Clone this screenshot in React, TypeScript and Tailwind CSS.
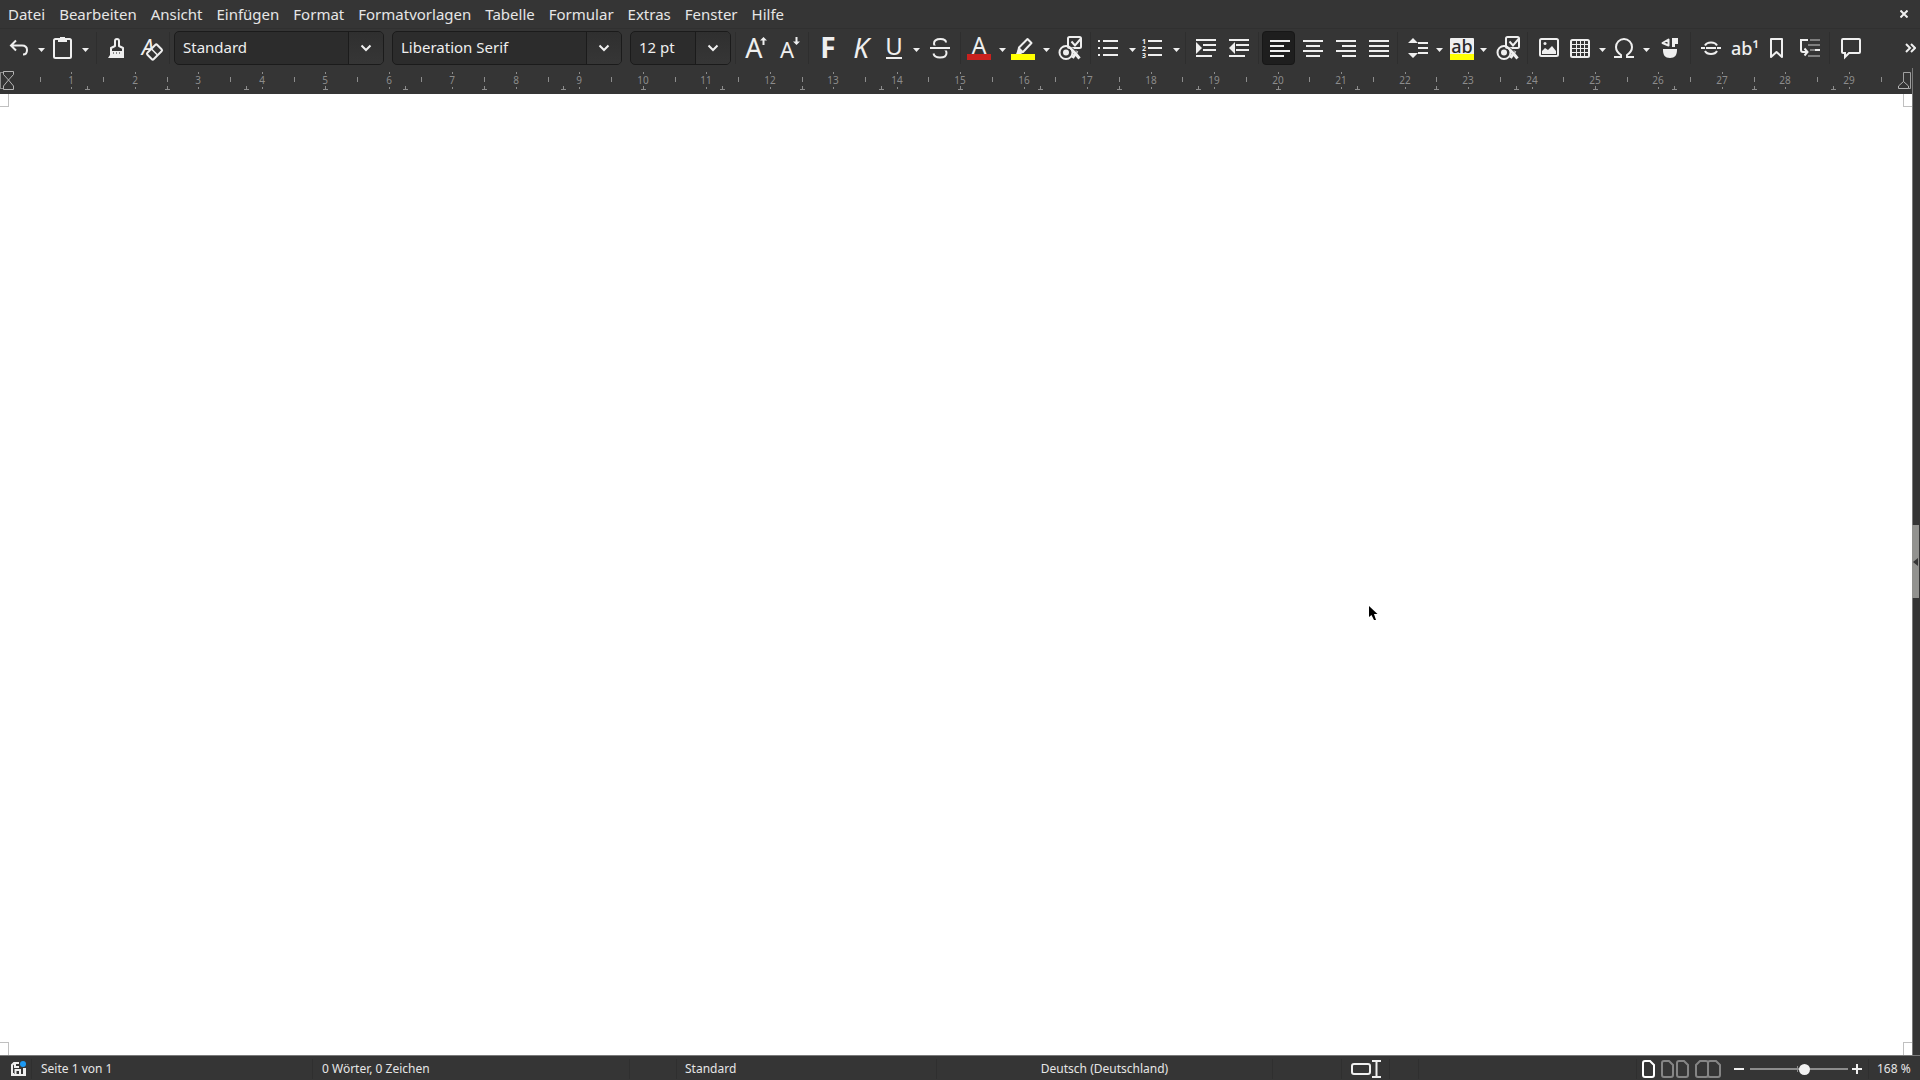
import { ReactNode } from 'react';

const menus = ['Datei', 'Bearbeiten', 'Ansicht', 'Einfügen', 'Format', 'Formatvorlagen', 'Tabelle', 'Formular', 'Extras', 'Fenster', 'Hilfe'];

const CM = 63.48;
const RULER_START = 8;

function Icon({ children }: { children: ReactNode }) {
  return (
    <svg width="24" height="24" viewBox="0 0 24 24" fill="none" stroke="#efefef" strokeWidth="2" className="shrink-0 overflow-visible">
      {children}
    </svg>
  );
}

function Glyph({ x, y, size, weight = 400, italic = false, color = '#efefef', children }: { x: number, y: number, size: number, weight?: number, italic?: boolean, color?: string, children: ReactNode }) {
  return (
    <text x={x} y={y} fontSize={size} fontWeight={weight} fontStyle={italic ? 'italic' : 'normal'} textAnchor="middle" fill={color} stroke="none" className="font-['Noto_Sans',sans-serif]">
      {children}
    </text>
  );
}

function Tool({ label, active, children }: { label: string, active?: boolean, children: ReactNode }) {
  return (
    <button aria-label={label} className={active ? "flex h-[34px] w-[33px] shrink-0 items-center rounded-[4px] border border-[#171717] bg-[#1e1e1e] pl-1" : "flex h-[34px] w-[33px] shrink-0 items-center pl-1"}>
      <Icon>{children}</Icon>
    </button>
  );
}

function SplitTool({ label, children }: { label: string, children: ReactNode }) {
  return (
    <button aria-label={label} aria-haspopup="menu" className="flex h-[34px] w-11 shrink-0 items-center gap-[7px] pl-1">
      <Icon>{children}</Icon>
      <svg width="7" height="4" viewBox="0 0 7 4" fill="#efefef" className="mt-1 shrink-0"><path d="M0 0h7L3.5 4z" /></svg>
    </button>
  );
}

function Separator() {
  return <div className="mx-[3px] h-8 w-px shrink-0 bg-[#2e2e2e]" />;
}

function Combo({ label, value, className, arrow }: { label: string, value: string, className: string, arrow: string }) {
  return (
    <div className={`relative h-[34px] shrink-0 overflow-hidden rounded-[5px] border border-[#1b1b1b] bg-[#2c2c2c] ${className}`}>
      <select aria-label={label} className="h-full w-full appearance-none bg-transparent pl-2 pb-px text-[15px] text-[#efefef] outline-none">
        <option>{value}</option>
      </select>
      <div className={`pointer-events-none absolute inset-y-0 right-0 flex items-center justify-center border-l border-[#1b1b1b] bg-linear-to-b from-[#2f2f2f] to-[#363636] ${arrow}`}>
        <svg width="12" height="8" viewBox="0 0 12 8" fill="none" stroke="#efefef" strokeWidth="2"><path d="M1.500 1.500 6 6l4.500-4.500" /></svg>
      </div>
    </div>
  );
}

function CharStyleIcon() {
  return (
    <>
      <rect x="10" y="1" width="13" height="11" rx="1.500" />
      <path d="M13.500 5.500l3.500 4 6-7" />
      <circle cx="8" cy="16.500" r="6.500" />
      <circle cx="8" cy="16.500" r="3" fill="#efefef" stroke="none" />
      <path d="M13 12l8.500 10.500M19 15l-4.500 7" strokeWidth="3" />
      <path d="M14 11.500l5 5" stroke="#353535" strokeWidth="1" />
    </>
  );
}

function Toolbar() {
  return (
    <div className="flex h-10 shrink-0 items-center overflow-hidden border-t border-[#303030] pb-px pl-[3px] pr-1">
      <SplitTool label="Rückgängig"><path d="M9 4.500 4 9.500l5 5M4 9.500h11c3.500 0 5 1.800 5 4.500s-1.500 4.500-4 4.500" /></SplitTool>
      <SplitTool label="Einfügen">
        <rect x="3" y="3" width="17" height="19" rx="1.500" />
        <path d="M7 2h2V1h5v1h2v4H7z" fill="#efefef" stroke="none" />
      </SplitTool>
      <div className="w-0.5 shrink-0" />
      <Separator />
      <Tool label="Formatierung klonen">
        <path d="M11 10V5a2 2 0 0 1 4 0v5l4 2v4H7v-4z" strokeLinejoin="round" />
        <path d="M6 15h14v7H4l2-3z" fill="#efefef" stroke="none" />
        <path d="M9.500 16v2M12.500 16v2M15.500 16v2" stroke="#888" strokeWidth="1" />
      </Tool>
      <Tool label="Formatierung löschen">
        <Glyph x={11} y={19} size={22} italic>A</Glyph>
        <rect x="10.500" y="11.500" width="14" height="9" rx="1.500" transform="rotate(-45 17.500 16)" fill="#353535" />
        <path d="M14.500 13l6 6" strokeWidth="1.500" />
      </Tool>
      <Separator />
      <div className="mx-px flex shrink-0 gap-2">
        <Combo label="Absatzvorlage" value="Standard" className="w-[210px]" arrow="w-[35px]" />
        <Combo label="Schriftname" value="Liberation Serif" className="w-[230px]" arrow="w-[35px]" />
        <Combo label="Schriftgröße" value="12 pt" className="w-[101px]" arrow="w-[35px]" />
      </div>
      <Separator />
      <Tool label="Schrift vergrößern">
        <Glyph x={11} y={22} size={27}>A</Glyph>
        <path d="M20.500 9V4" /><path d="M17 4.500 20.500 1 24 4.500z" fill="#efefef" stroke="none" />
      </Tool>
      <Tool label="Schrift verkleinern">
        <Glyph x={11} y={22} size={22}>A</Glyph>
        <path d="M20.500 1v5" /><path d="M17 5.500 20.500 9 24 5.500z" fill="#efefef" stroke="none" />
      </Tool>
      <Separator />
      <Tool label="Fett"><Glyph x={12} y={22} size={28} weight={700}>F</Glyph></Tool>
      <Tool label="Kursiv"><Glyph x={12} y={22} size={28} weight={400} italic>K</Glyph></Tool>
      <SplitTool label="Unterstrichen"><Glyph x={12} y={19} size={24}>U</Glyph><path d="M4 22h16" /></SplitTool>
      <div className="w-0.5 shrink-0" />
      <Tool label="Durchgestrichen">
        <path d="M18 6.500C18 4 16 3 12.500 3S6 4.500 6 7.500 8 12 12 12s6.500 2 6.500 5-2.500 4.500-6.500 4.500S6 20 5.500 17.500" />
        <path d="M2 12h20" stroke="#353535" strokeWidth="5" />
        <path d="M2 12h20" />
      </Tool>
      <Separator />
      <SplitTool label="Schriftfarbe">
        <Glyph x={11} y={18} size={23}>A</Glyph>
        <path d="M-1 18h24v6H-1z" fill="#c9211e" stroke="none" />
      </SplitTool>
      <SplitTool label="Zeichenhervorhebungsfarbe">
        <path d="M7 11.500 15.500 3l4 4-8.500 9-5 1z" strokeLinejoin="round" />
        <path d="M7 11l4.500 4.500L9 18H4z" fill="#efefef" stroke="none" />
        <path d="M-1 18h24v6H-1z" fill="#ffff00" stroke="none" />
      </SplitTool>
      <div className="w-0.5 shrink-0" />
      <Tool label="Zeichenvorlage"><CharStyleIcon /></Tool>
      <Separator />
      <SplitTool label="Aufzählungsliste"><path d="M0 5h2M0 12h2M0 19h2M5 5h15M5 12h15M5 19h15" /></SplitTool>
      <SplitTool label="Nummerierte Liste">
        <Glyph x={2} y={8} size={7} weight={700}>
          <tspan x="2">1</tspan>
          <tspan x="2" dy="7">2</tspan>
          <tspan x="2" dy="7">3</tspan>
        </Glyph>
        <path d="M6 5h14M6 12h14M6 19h14" />
      </SplitTool>
      <Separator />
      <Tool label="Einzug erhöhen">
        <path d="M3 4h20M10 9h13M10 14h13M3 20h16" />
        <path d="M3 6l6 6-6 6z" fill="#efefef" stroke="none" />
      </Tool>
      <Tool label="Einzug verringern">
        <path d="M3 4h20M10 9h13M10 14h13M3 20h16" />
        <path d="M9 6l-6 6 6 6z" fill="#efefef" stroke="none" />
      </Tool>
      <Separator />
      <Tool label="Linksbündig" active><path d="M3 5h20M3 10h14M3 15h20M3 20h14" /></Tool>
      <Tool label="Zentriert"><path d="M4 5h20M7 10h14M4 15h20M7 20h14" /></Tool>
      <Tool label="Rechtsbündig"><path d="M4 5h20M10 10h14M4 15h20M10 20h14" /></Tool>
      <Tool label="Blocksatz"><path d="M4 5h20M4 10h20M4 15h20M4 20h20" /></Tool>
      <Separator />
      <SplitTool label="Zeilenabstand">
        <path d="M3 7l5-5 5 5zM3 17h10l-5 5z" fill="#efefef" stroke="none" />
        <path d="M13 7h10M13 12h10M13 17h10" />
      </SplitTool>
      <SplitTool label="Absatzhintergrund">
        <rect x="1" y="2" width="24" height="22" rx="1" fill="#efefef" stroke="none" />
        <Glyph x={13} y={17} size={18} weight={500} color="#2a2a2a">ab</Glyph>
        <path d="M1 18h24v6H1z" fill="#ffff00" stroke="none" />
      </SplitTool>
      <div className="w-0.5 shrink-0" />
      <Tool label="Absatzvorlage bearbeiten"><g transform="translate(1 0)"><CharStyleIcon /></g></Tool>
      <Separator />
      <Tool label="Bild einfügen">
        <rect x="5" y="3" width="18" height="17" rx="1.500" />
        <path d="M7 18v-3l3-3 3 2 4-4 4 5v3z" fill="#efefef" stroke="none" />
        <circle cx="10" cy="7.500" r="1.500" fill="#efefef" stroke="none" />
      </Tool>
      <SplitTool label="Tabelle einfügen">
        <rect x="3" y="4" width="18" height="17" rx="1.500" />
        <path d="M3 8.500h18M3 12.500h18M3 16.500h18M8.500 4v17M12.500 4v17M16.500 4v17" strokeWidth="1" />
      </SplitTool>
      <SplitTool label="Sonderzeichen">
        <path d="M2 21h7v-2c-3-2-5-4.500-5-8a8 8 0 0 1 16 0c0 3.500-2 6-5 8v2h7" />
      </SplitTool>
      <div className="w-0.5 shrink-0" />
      <Tool label="Formen">
        <path d="M10.500 3.500v6l-6-2.500z" strokeLinejoin="round" />
        <path d="M14 2h6v6h-3v3h-3zM5 13h14v1c0 5-2 8-7 8S5 19 5 14z" fill="#efefef" stroke="none" />
      </Tool>
      <Separator />
      <Tool label="Hyperlink">
        <path d="M3 12h4M19 12h4M8 12h10" />
        <path d="M7 9.500C8 7.500 10 6.500 13 6.500s5 1 6 3M7 15c1 2 3 3 6 3s5-1 6-3" />
      </Tool>
      <Tool label="Fußnote einfügen">
        <Glyph x={14} y={19} size={18} weight={500}>ab¹</Glyph>
      </Tool>
      <Tool label="Textmarke"><path d="M7 3h11v18l-5.500-5L7 21z" strokeLinejoin="round" /></Tool>
      <Tool label="Querverweis">
        <path d="M3 4h8M18 14h5M4 4v10q0 2 2 2h4M7.500 12.500l3 3.500-3 3.500" />
        <path d="M13 4h10M11 9h12M13 14h5M11 20h12" stroke="#7f7f7f" />
      </Tool>
      <Separator />
      <Tool label="Kommentar"><path d="M6 3h16q1 0 1 1v12q0 1-1 1H12l-4 4v-4H6q-1 0-1-1V4q0-1 1-1z" /></Tool>
      <button aria-label="Weitere Symbole" className="ml-auto shrink-0">
        <svg width="11" height="10" viewBox="0 0 11 10" fill="none" stroke="#efefef" strokeWidth="2"><path d="M1 1l4 4-4 4M6 1l4 4-4 4" /></svg>
      </button>
    </div>
  );
}

function Ruler() {
  const halves = Array.from({ length: 59 }, (_, i) => i + 1);
  const tabs = Array.from({ length: 23 }, (_, i) => i + 1);
  return (
    <svg width="100%" height="26" shapeRendering="crispEdges" stroke="#8c8c8c" fill="none" className="block">
      {halves.map((n) => {
        const x = Math.round(RULER_START + n * CM / 2) + 0.5;
        return n % 2 ? (
          <path key={n} d={`M${x} 9v5`} />
        ) : (
          <g key={n}>
            <path d={`M${x} 4v2M${x} 19v2`} />
            <text x={x - 0.5} y="16" fontSize="10" textAnchor="middle" fill="#8c8c8c" stroke="none">{n / 2}</text>
          </g>
        );
      })}
      {tabs.map((n) => {
        const x = Math.round(RULER_START + n * CM * 1.25) + 0.5;
        return <path key={n} d={`M${x} 18v4M${x - 2.5} 21.500h5`} />;
      })}
      <path d="M3 4.500H.5v16H3" />
      <g stroke="#b4b4b4" shapeRendering="auto">
        <path d="M3.500 3.500h10v3l-5 5.500-5-5.500zM8.500 12l5 6v3.500h-10V18z" />
      </g>
    </svg>
  );
}

function RulerEnd() {
  return (
    <svg width="14" height="19" viewBox="0 0 14 19" fill="none" stroke="#a0a0a0" className="absolute right-0 top-[3px]">
      <path d="M5.500 11V1.500h7v16h-2" />
      <path d="M.5 17.500V15l5-4.500 5 4.500v2.500z" stroke="#b4b4b4" fill="#353535" />
    </svg>
  );
}

function Cell({ className, children }: { className: string, children?: ReactNode }) {
  return <div className={`flex h-5 shrink-0 items-center border-r border-[#2f2f2f] ${className}`}>{children}</div>;
}

function StatusBar() {
  return (
    <footer className="flex h-[25px] shrink-0 items-center overflow-hidden whitespace-nowrap border-t border-[#7a7a7a] bg-[#353535] pt-0.5 text-xs text-[#e6e6e6]">
      <Cell className="w-8 pl-[11px]">
        <svg width="16" height="16" viewBox="0 0 16 16" fill="none" stroke="#efefef" strokeWidth="2">
          <path d="M8 2H3L1 4v9h2M4 2v4h4M13 7v7h-3M4.500 14V9H9v5z" />
          <path d="M1 13v1h13V7" />
          <circle cx="12" cy="3" r="3" fill="#1d99f3" stroke="none" />
        </svg>
      </Cell>
      <Cell className="w-[281px] pl-[9px]">Seite 1 von 1</Cell>
      <Cell className="w-[317px] pl-[9px]">0 Wörter, 0 Zeichen</Cell>
      <Cell className="w-[47px]" />
      <Cell className="w-[260px] pl-2">Standard</Cell>
      <Cell className="w-[336px] justify-center">Deutsch (Deutschland)</Cell>
      <Cell className="w-[69px]" />
      <Cell className="w-12 pl-[9px]">
        <svg width="31" height="18" viewBox="0 0 31 18" fill="none" stroke="#efefef" strokeWidth="2">
          <rect x="1" y="4" width="18" height="10" rx="2" />
          <path d="M21 1h9M21 17h9M25.500 1v16" />
        </svg>
      </Cell>
      <Cell className="w-[29px]" />
      <Cell className="min-w-0 flex-1" />
      <Cell className="w-[232px] pl-[5px]">
        <button aria-label="Einzelseitenansicht">
          <svg width="13" height="18" viewBox="0 0 13 18" fill="none" stroke="#fff" strokeWidth="2"><path d="M3 1h5l4 4v10q0 2-2 2H3q-2 0-2-2V3q0-2 2-2z" /></svg>
        </button>
        <button aria-label="Mehrseitenansicht" className="ml-1.5">
          <svg width="28" height="18" viewBox="0 0 28 18" fill="none" stroke="#858585" strokeWidth="2"><path d="M3 1h5l4 4v10q0 2-2 2H3q-2 0-2-2V3q0-2 2-2zM18 1h5l4 4v10q0 2-2 2h-7q-2 0-2-2V3q0-2 2-2z" /></svg>
        </button>
        <button aria-label="Buchansicht" className="ml-1.5">
          <svg width="26" height="18" viewBox="0 0 26 18" fill="none" stroke="#858585" strokeWidth="2"><path d="M5 1h6q2 0 2 2v12q0 2-2 2H3q-2 0-2-2V5zM15 1h6l4 4v10q0 2-2 2h-8q-2 0-2-2V3q0-2 2-2z" /></svg>
        </button>
        <button aria-label="Verkleinern" className="ml-[13px]">
          <svg width="10" height="10" viewBox="0 0 10 10" stroke="#efefef" strokeWidth="2"><path d="M0 5h10" /></svg>
        </button>
        <div className="relative ml-1.5 flex h-3 w-[98px] items-center">
          <div className="h-0.5 w-full bg-[#8c8c8c]" />
          <div className="absolute left-[47px] top-[3px] h-1.5 w-px bg-[#8c8c8c]" />
          <input type="range" aria-label="Maßstab" min="0" max="100" defaultValue="56" className="absolute inset-0 w-full appearance-none bg-transparent [&::-webkit-slider-thumb]:size-[11px] [&::-webkit-slider-thumb]:appearance-none [&::-webkit-slider-thumb]:rounded-full [&::-webkit-slider-thumb]:bg-[#f2f2f2]" />
        </div>
        <button aria-label="Vergrößern" className="ml-1">
          <svg width="10" height="10" viewBox="0 0 10 10" stroke="#efefef" strokeWidth="2"><path d="M0 5h10M5 0v10" /></svg>
        </button>
      </Cell>
      <div className="w-[51px] shrink-0 pl-2">168 %</div>
    </footer>
  );
}

export default function App() {
  return (
    <div className="flex h-screen flex-col overflow-hidden bg-[#353535] font-['Noto_Sans',sans-serif] text-[#e6e6e6]">
      <nav className="flex h-7 shrink-0 items-center gap-3.5 overflow-hidden px-2 text-[15px]">
        {menus.map((menu) => <button key={menu}>{menu}</button>)}
        <button aria-label="Schließen" className="ml-auto mr-1">
          <svg width="8" height="8" viewBox="0 0 8 8" stroke="#efefef" strokeWidth="2"><path d="M.5.5l7 7M7.500.5l-7 7" /></svg>
        </button>
      </nav>

      <Toolbar />

      <div className="flex min-h-0 flex-1">
        <div className="flex min-w-0 flex-1 flex-col">
          <div className="relative overflow-hidden">
            <Ruler />
            <RulerEnd />
          </div>
          <main className="relative flex-1 bg-white">
            <div className="absolute left-0 top-0 h-[13px] w-[9px] border-b border-r border-[#c0c0c0]" />
            <div className="absolute right-0 top-0 h-[13px] w-[9px] border-b border-l border-[#c0c0c0]" />
            <div className="absolute bottom-0 left-0 h-[13px] w-[9px] border-r border-t border-[#c0c0c0]" />
            <div className="absolute bottom-0 right-0 h-[13px] w-[9px] border-l border-t border-[#c0c0c0]" />
            <svg width="9" height="15" viewBox="0 0 9 15" className="absolute left-[1369px] top-[512px]"><path d="M0 0v11l2.500-2L5 14h2L5 8h3.500z" /></svg>
          </main>
        </div>
        <aside className="relative flex w-2 shrink-0 items-center border-l border-[#7a7a7a]">
          <button aria-label="Seitenleiste einblenden" className="absolute -left-px top-[457px] flex h-[73px] w-[7px] items-center justify-center bg-[#92928f]">
            <svg width="5" height="8" viewBox="0 0 5 8" fill="#353535"><path d="M5 0v8L0 4z" /></svg>
          </button>
        </aside>
      </div>

      <StatusBar />
    </div>
  );
}
